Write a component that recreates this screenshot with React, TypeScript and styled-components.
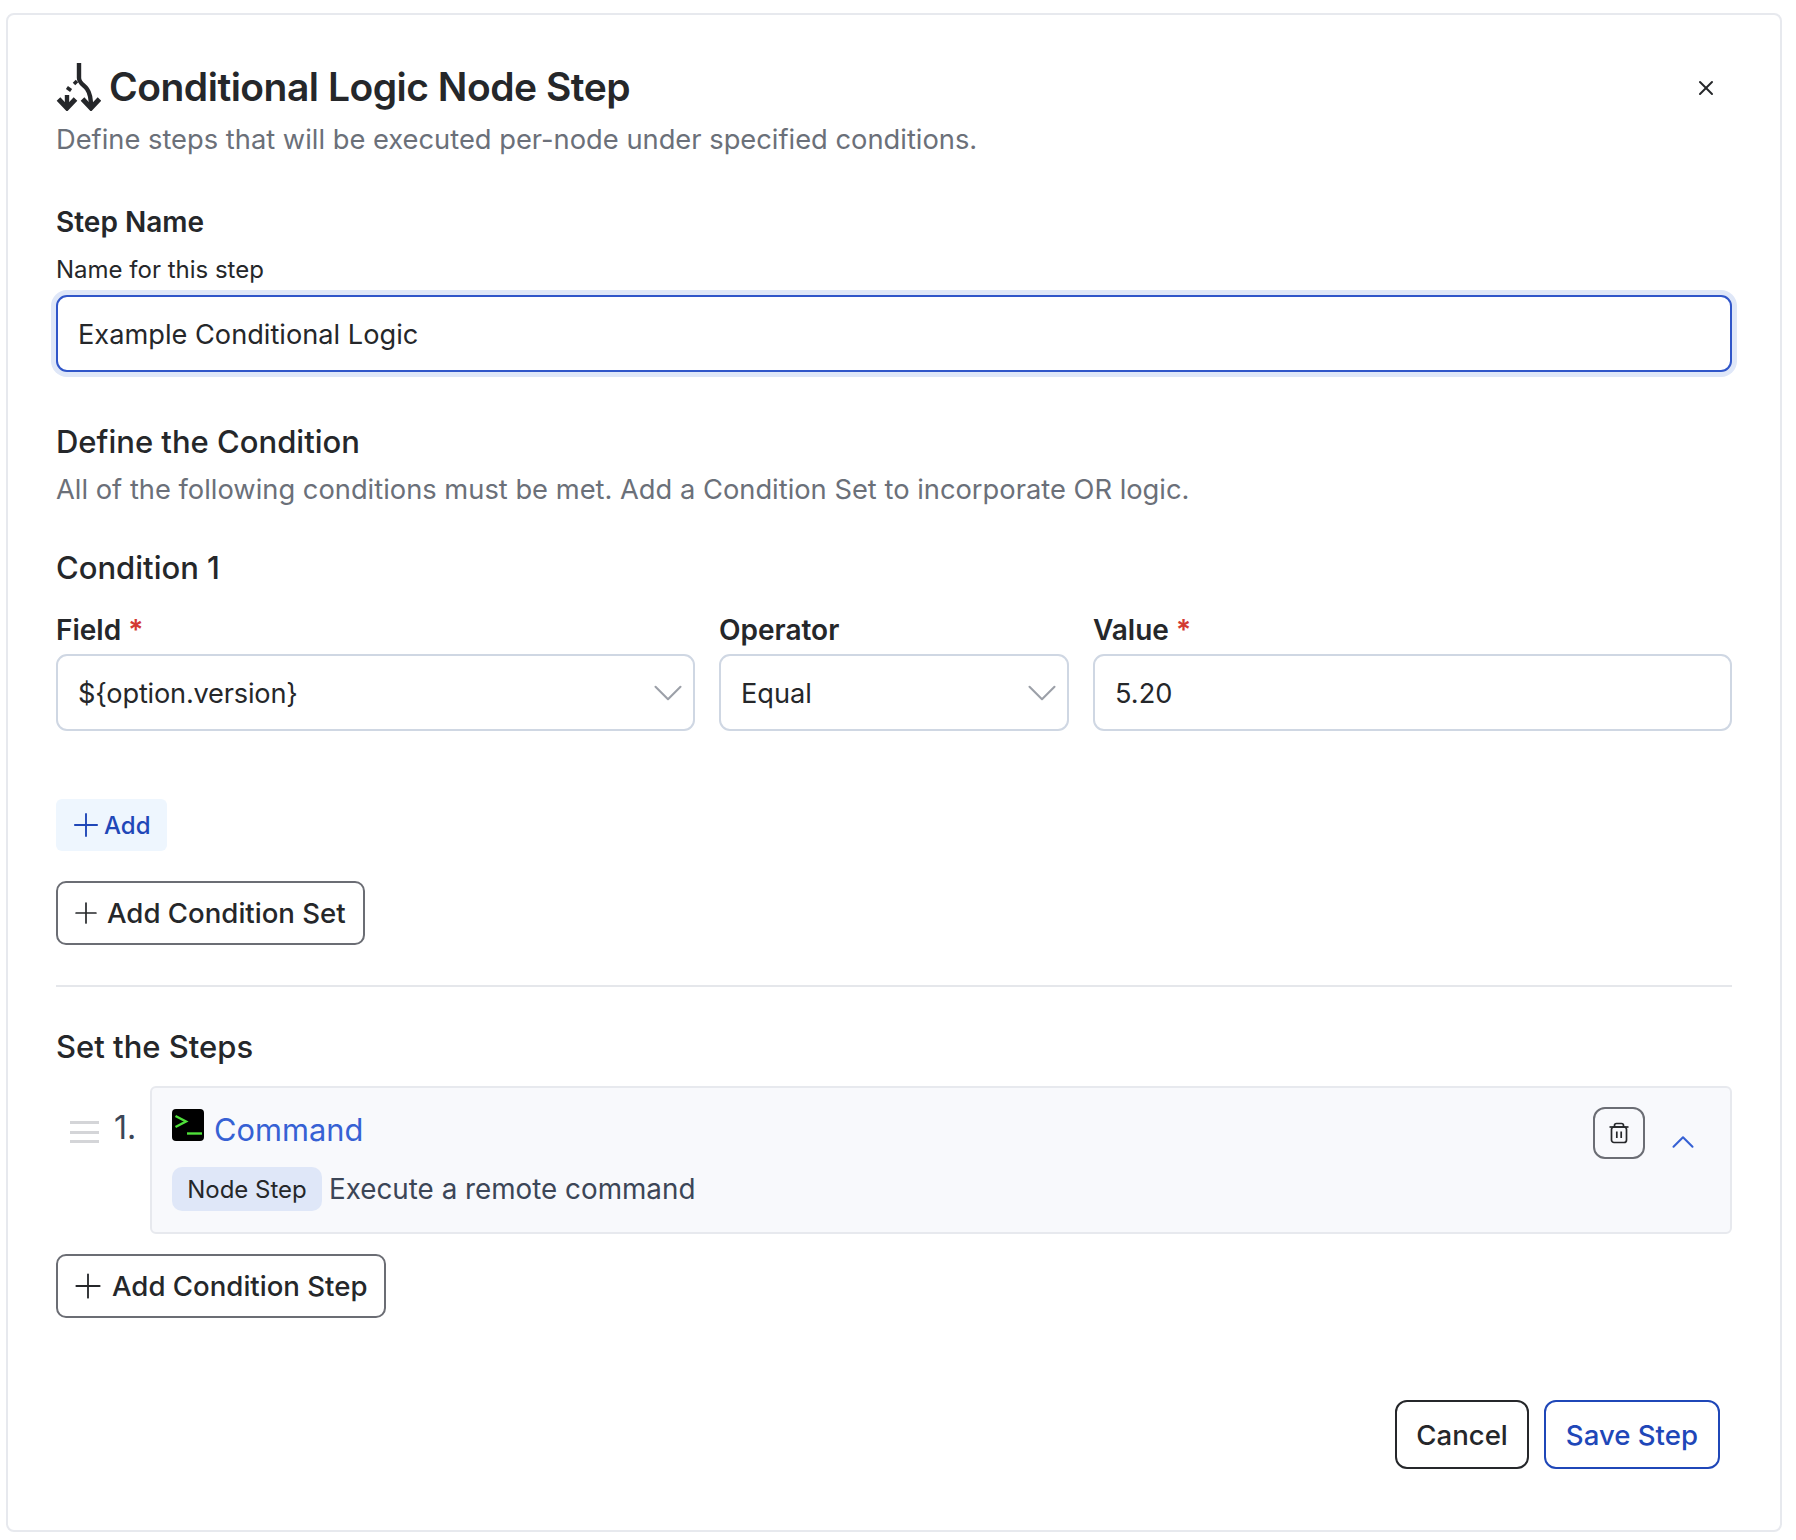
import React from "react";
import styled, { createGlobalStyle } from "styled-components";
import { ChevronDown, ChevronUp, Plus, X } from "lucide-react";

const GlobalStyle = createGlobalStyle`
  html, body {
    margin: 0;
    padding: 0;
    background: #ffffff;
  }
  * {
    box-sizing: border-box;
  }
`;

const Page = styled.div`
  width: 1796px;
  height: 1540px;
  padding: 13px 14px 8px 6px;
  font-family: Inter, "Liberation Sans", sans-serif;
  color: #25272a;
`;
const Card = styled.div`
  position: relative;
  height: 1519px;
  padding: 0 48px 0 48px;
  border: 2px solid #e7e9ee;
  border-radius: 8px;
  background: #fff;
`;
const Header = styled.div`
  display: flex;
  align-items: center;
  height: 48px;
  margin-top: 48px;
`;
const Title = styled.h2`
  margin: 0 0 0 8px;
  font-size: 39px;
  line-height: 48px;
  font-weight: 600;
  letter-spacing: -0.5px;
`;
const CloseButton = styled.button`
  position: absolute;
  top: 61px;
  right: 62px;
  padding: 0;
  border: none;
  background: none;
  display: flex;
  color: #25272a;
`;
const Subtitle = styled.p<{ $top: number }>`
  margin: ${(p) => p.$top}px 0 0;
  font-size: 27.3px;
  line-height: 36px;
  color: #6b7079;
`;
const FieldLabel = styled.label`
  display: block;
  font-size: 28px;
  line-height: 36px;
  font-weight: 600;
`;
const StepNameLabel = styled(FieldLabel)`
  margin-top: 46px;
`;
const Hint = styled.div`
  margin-top: 12px;
  font-size: 24px;
  line-height: 36px;
`;
const TextField = styled.div<{ $focused?: boolean }>`
  display: flex;
  align-items: center;
  justify-content: space-between;
  height: 77px;
  padding: 1px 20px 0;
  font-size: 27.2px;
  color: #25272a;
  background: #fff;
  border-radius: 11px;
  border: 2px solid ${(p) => (p.$focused ? "#3056c9" : "#cfd7e3")};
  box-shadow: ${(p) => (p.$focused ? "0 0 0 5px #dfe7f8" : "none")};
`;
const NameField = styled(TextField)`
  margin-top: 7px;
`;
const OptionValue = styled.span`
  letter-spacing: -0.2px;
`;
const SectionTitle = styled.h3<{ $top: number }>`
  margin: ${(p) => p.$top}px 0 0;
  font-size: 31px;
  line-height: 40px;
  font-weight: 450;
`;
const ConditionGrid = styled.div`
  display: grid;
  grid-template-columns: 1fr 350px 1fr;
  column-gap: 24px;
  margin-top: 24px;
`;
const Column = styled.div`
  display: flex;
  flex-direction: column;
  gap: 6px;
`;
const Required = styled.span`
  color: #d33a32;
  margin-left: 7px;
`;
const Caret = styled(ChevronDown)`
  color: #9ca0a8;
  flex: none;
  margin: -12px -20px -12px 0;
`;
const AddButton = styled.button`
  display: flex;
  align-items: center;
  gap: 7px;
  height: 52px;
  width: 111px;
  margin-top: 68px;
  padding: 0 0 0 19px;
  border: none;
  border-radius: 6px;
  background: #eef6fe;
  color: #1f47b8;
  font-family: inherit;
  font-size: 24px;
  font-weight: 500;
`;
const OutlineButton = styled.button<{ $top: number; $width: number; $gap: number }>`
  display: flex;
  align-items: center;
  gap: ${(p) => p.$gap}px;
  width: ${(p) => p.$width}px;
  height: 64px;
  margin-top: ${(p) => p.$top}px;
  padding: 0 0 0 18px;
  border: 2px solid #6b6d74;
  border-radius: 10px;
  background: #fff;
  color: #25272a;
  font-family: inherit;
  font-size: 27.6px;
  font-weight: 500;
  white-space: nowrap;
`;
const PlusGlyph = styled(Plus)<{ $inset: number }>`
  flex: none;
  margin: -${(p) => p.$inset}px;
`;
const Divider = styled.hr`
  margin: 40px 0 0;
  border: none;
  border-top: 2px solid #e5e7eb;
`;
const StepRow = styled.div`
  display: flex;
  margin-top: 19px;
`;
const Gutter = styled.div`
  display: flex;
  width: 94px;
  flex: none;
  padding: 22px 0 0 14px;
`;
const DragHandle = styled.div`
  width: 29px;
  height: 22px;
  margin-top: 13px;
  border-top: 3px solid #d4d5d8;
  border-bottom: 3px solid #d4d5d8;
  position: relative;
  &::after {
    content: "";
    position: absolute;
    left: 0;
    right: 0;
    top: 6.5px;
    border-top: 3px solid #d4d5d8;
  }
`;
const StepNumber = styled.div`
  margin-left: 15px;
  font-size: 32px;
  line-height: 40px;
  color: #3c4657;
`;
const StepBox = styled.div`
  position: relative;
  flex: 1;
  height: 148px;
  padding: 21px 20px 0;
  border: 2px solid #e7e9ee;
  border-radius: 6px;
  background: #f8f9fc;
`;
const StepTitleRow = styled.div`
  display: flex;
  align-items: flex-start;
`;
const StepLink = styled.span`
  margin: 1px 0 0 10px;
  font-size: 30.8px;
  line-height: 40px;
  color: #3661d4;
`;
const StepMeta = styled.div`
  display: flex;
  align-items: center;
  margin-top: 17px;
`;
const Badge = styled.span`
  display: flex;
  align-items: center;
  justify-content: center;
  width: 150px;
  height: 44px;
  border-radius: 10px;
  background: #dfe7f8;
  font-size: 24px;
  color: #25272a;
`;
const StepDescription = styled.span`
  margin-left: 7px;
  font-size: 27.8px;
  color: #3c4657;
`;
const StepActions = styled.div`
  position: absolute;
  top: 19px;
  right: 28px;
  display: flex;
  align-items: flex-start;
  gap: 19px;
`;
const TrashButton = styled.button`
  display: flex;
  align-items: center;
  justify-content: center;
  width: 52px;
  height: 52px;
  padding: 0;
  border: 2px solid #6b6d74;
  border-radius: 12px;
  background: none;
  color: #25272a;
`;
const Collapse = styled(ChevronUp)`
  color: #3661d4;
  margin-top: 16px;
`;
const Footer = styled.div`
  display: flex;
  justify-content: flex-end;
  gap: 15px;
  margin-top: 82px;
  padding-right: 12px;
`;
const FooterButton = styled.button<{ $primary?: boolean }>`
  height: 69px;
  padding: 0 ${(p) => (p.$primary ? 20 : 19)}px;
  border: 2px solid ${(p) => (p.$primary ? "#1f47b8" : "#25272a")};
  border-radius: 12px;
  background: #fff;
  color: ${(p) => (p.$primary ? "#1f47b8" : "#25272a")};
  font-family: inherit;
  font-size: 27.6px;
  font-weight: 500;
`;

const BranchIcon = () => (
  <svg width="45" height="48" viewBox="-1 0 45 48" fill="none" stroke="#25272a" strokeWidth="4.4">
    <path d="M22 0V15C22 20 27 22 30 26C33 30 34 34 34 44" />
    <path d="M20 18L17 21" strokeWidth="3.6" />
    <path d="M13 24.5L11 27.5" strokeWidth="5" />
    <path d="M10 32V44" />
    <path d="M25.5 36L34 45L42.5 36" strokeWidth="5" />
    <path d="M1.5 36L10 45L18.5 36" strokeWidth="5" />
  </svg>
);

const TerminalIcon = () => (
  <svg width="32" height="32" viewBox="0 0 32 32">
    <rect width="32" height="32" rx="4" fill="#000" />
    <path d="M3.5 7L14 12.5L3.5 18" fill="none" stroke="#4fe03a" strokeWidth="2.4" />
    <path d="M15 24.5H30" stroke="#4fe03a" strokeWidth="2.4" />
  </svg>
);

const TrashIcon = () => (
  <svg width="22" height="22" viewBox="0 0 22 22" fill="none" stroke="currentColor" strokeWidth="1.7">
    <path d="M1.5 5H20.5" />
    <path d="M6.5 5V3.5C6.5 2.2 7.5 1.5 8.5 1.5H13.5C14.5 1.5 15.5 2.2 15.5 3.5V5" />
    <rect x="3.5" y="5" width="15" height="15.5" rx="2.5" />
    <path d="M8.8 9.5V16M13.2 9.5V16" />
  </svg>
);

const App: React.FC = () => {
  return (
    <Page>
      <GlobalStyle />
      <Card>
        <Header>
          <BranchIcon />
          <Title>Conditional Logic Node Step</Title>
        </Header>
        <CloseButton>
          <X size={24} strokeWidth={2} />
        </CloseButton>
        <Subtitle $top={11}>Define steps that will be executed per-node under specified conditions.</Subtitle>

        <StepNameLabel>Step Name</StepNameLabel>
        <Hint>Name for this step</Hint>
        <NameField $focused>Example Conditional Logic</NameField>

        <SectionTitle $top={50}>Define the Condition</SectionTitle>
        <Subtitle $top={10}>All of the following conditions must be met. Add a Condition Set to incorporate OR logic.</Subtitle>

        <SectionTitle $top={40}>Condition 1</SectionTitle>
        <ConditionGrid>
          <Column>
            <FieldLabel>
              Field<Required>*</Required>
            </FieldLabel>
            <TextField>
              <OptionValue>{"${option.version}"}</OptionValue>
              <Caret size={50} strokeWidth={1} />
            </TextField>
          </Column>
          <Column>
            <FieldLabel>Operator</FieldLabel>
            <TextField>
              Equal
              <Caret size={50} strokeWidth={1} />
            </TextField>
          </Column>
          <Column>
            <FieldLabel>
              Value<Required>*</Required>
            </FieldLabel>
            <TextField>5.20</TextField>
          </Column>
        </ConditionGrid>

        <AddButton>
          <PlusGlyph size={38} strokeWidth={1.2} $inset={8} />
          Add
        </AddButton>
        <OutlineButton $top={30} $width={309} $gap={11}>
          <PlusGlyph size={34} strokeWidth={1.2} $inset={7} />
          Add Condition Set
        </OutlineButton>

        <Divider />

        <SectionTitle $top={40}>Set the Steps</SectionTitle>
        <StepRow>
          <Gutter>
            <DragHandle />
            <StepNumber>1.</StepNumber>
          </Gutter>
          <StepBox>
            <StepTitleRow>
              <TerminalIcon />
              <StepLink>Command</StepLink>
            </StepTitleRow>
            <StepMeta>
              <Badge>Node Step</Badge>
              <StepDescription>Execute a remote command</StepDescription>
            </StepMeta>
            <StepActions>
              <TrashButton>
                <TrashIcon />
              </TrashButton>
              <Collapse size={38} strokeWidth={1.3} />
            </StepActions>
          </StepBox>
        </StepRow>
        <OutlineButton $top={20} $width={330} $gap={12}>
          <PlusGlyph size={40} strokeWidth={1.1} $inset={8} />
          Add Condition Step
        </OutlineButton>

        <Footer>
          <FooterButton>Cancel</FooterButton>
          <FooterButton $primary>Save Step</FooterButton>
        </Footer>
      </Card>
    </Page>
  );
};

export default App;
